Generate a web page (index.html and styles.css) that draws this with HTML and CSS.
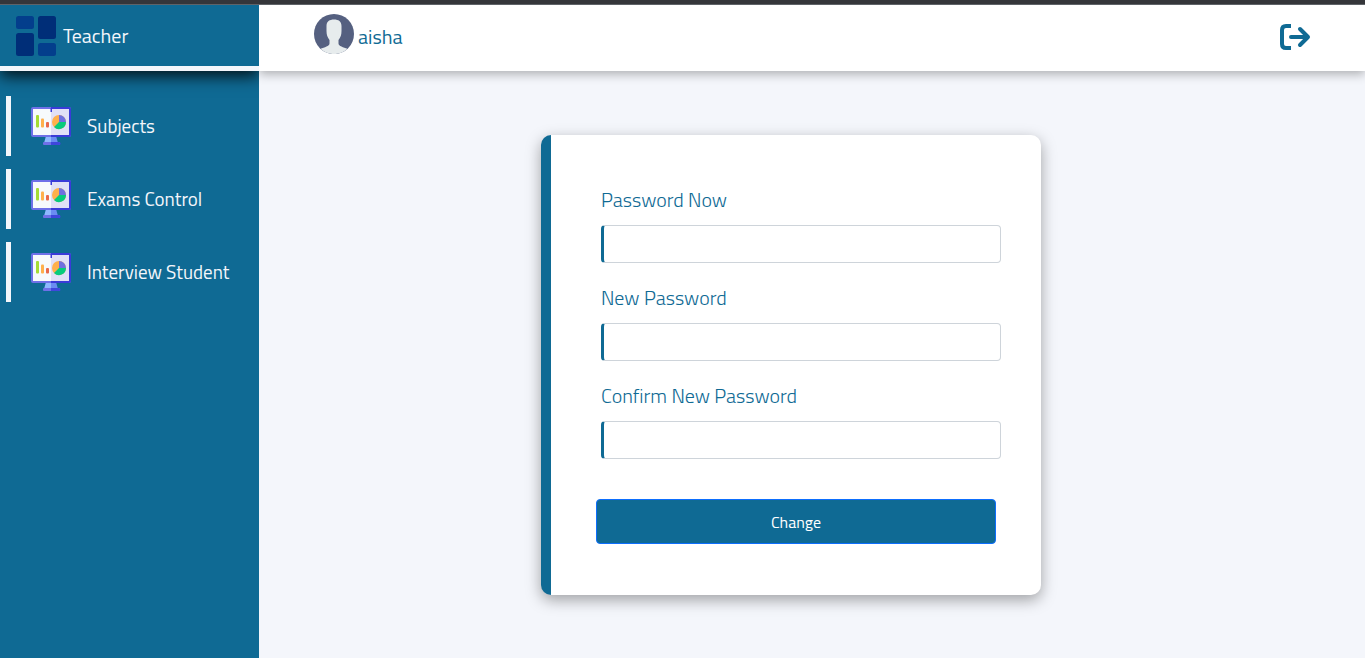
FILE: index.html
```html
<!DOCTYPE html>
<html lang="en">
<head>
<meta charset="utf-8">
<meta name="viewport" content="width=device-width, initial-scale=1">
<title>Change Password</title>
<link rel="stylesheet" href="styles.css">
</head>
<body>
<svg class="defs" aria-hidden="true">
  <symbol id="monitor" viewBox="0 0 40 40">
    <path fill="#8db8ff" d="M15 30h5v7h-7z"/>
    <path fill="#6a8cf2" d="M20 30h5l2 7h-7z"/>
    <rect x="0" y="1" width="40" height="30" rx="2" fill="#6f70e8"/>
    <path fill="#3a3bd8" d="M20 1h18a2 2 0 0 1 2 2v26a2 2 0 0 1-2 2H20z"/>
    <path fill="#f7fafc" d="M2 3h18v26H2z"/>
    <path fill="#e1e0f6" d="M20 3h18v26H20z"/>
    <path fill="#3a3bd8" d="M19.500 2h1.500v4h-1.500z"/>
    <rect x="5" y="9" width="3" height="12.500" rx="1" fill="#a6dc35"/>
    <rect x="10" y="12.500" width="3" height="9" rx="1" fill="#ffb04c"/>
    <rect x="15" y="16" width="3" height="5.500" rx="1" fill="#e8694a"/>
    <circle cx="28" cy="16" r="7" fill="#ffb04c"/>
    <path fill="#6f70e0" d="M28 16V9a7 7 0 0 1 7 7z"/>
    <path fill="#08cb7c" d="M28 16h7a7 7 0 0 1-12 5z"/>
    <rect x="12" y="36" width="17" height="3" rx="1" fill="#6f70e8"/>
    <path fill="#3f47dc" d="M20 36h8a1 1 0 0 1 0 3h-8z"/>
  </symbol>
</svg>
<div class="strip"></div>
<div class="app">
  <aside class="sidebar">
    <div class="brand">
      <svg class="brand-icon" viewBox="0 0 40 40" aria-hidden="true">
        <rect width="18" height="13" rx="2.500" fill="#033e8c"/>
        <rect y="17" width="18" height="23" rx="2.500" fill="#002e78"/>
        <rect x="22" width="18" height="23" rx="2.500" fill="#002e78"/>
        <rect x="22" y="27" width="18" height="13" rx="2.500" fill="#033e8c"/>
      </svg>
      <span>Teacher</span>
    </div>
    <nav class="menu">
      <a class="menu-item" href="#subjects"><svg class="menu-icon" aria-hidden="true"><use href="#monitor"/></svg>Subjects</a>
      <a class="menu-item" href="#exams"><svg class="menu-icon" aria-hidden="true"><use href="#monitor"/></svg>Exams Control</a>
      <a class="menu-item" href="#interview"><svg class="menu-icon" aria-hidden="true"><use href="#monitor"/></svg>Interview Student</a>
    </nav>
  </aside>
  <div class="page">
    <header class="topbar">
      <a class="user" href="#profile">
        <svg class="avatar" viewBox="0 0 40 40" aria-hidden="true">
          <circle cx="20" cy="20" r="20" fill="#556080"/>
          <path fill="#e7eced" d="M12.500 12c0-4.500 3-6.500 7.500-6.500s7.500 2 7.500 6.500v5c0 4-1 6.500-3 9v3.500c0 2.500 5 4 9 5.300a20 20 0 0 1-27 0c4-1.300 9-2.800 9-5.300V26c-2-2.500-3-5-3-9z"/>
        </svg>
        <span>aisha</span>
      </a>
      <button class="logout" type="button" aria-label="Log out">
        <svg viewBox="0 0 32 28" aria-hidden="true" fill="none" stroke="currentColor" stroke-width="4">
          <path d="M12 3H7Q3 3 3 7v14q0 4 4 4h5"/>
          <path d="M12 14h16M21 6l8 8-8 8" stroke-linecap="round" stroke-linejoin="round"/>
        </svg>
      </button>
    </header>
    <main class="content">
      <form class="card">
        <div class="field">
          <label for="current">Password Now</label>
          <input id="current" type="password">
        </div>
        <div class="field">
          <label for="new">New Password</label>
          <input id="new" type="password">
        </div>
        <div class="field">
          <label for="confirm">Confirm New Password</label>
          <input id="confirm" type="password">
        </div>
        <button class="submit" type="button">Change</button>
      </form>
    </main>
  </div>
</div>
</body>
</html>
```
FILE: styles.css
```css
* { box-sizing: border-box; }

body {
  margin: 0;
  min-height: 100vh;
  display: flex;
  flex-direction: column;
  background: #f4f6fb;
  color: #0f6a94;
  font: 20px/30px "Titillium Web", Roboto, sans-serif;
}

a { color: inherit; text-decoration: none; }
svg { display: block; flex: none; }
.defs { position: absolute; width: 0; height: 0; }

.strip {
  height: 5px;
  background: #35363a;
  border-bottom: 1px solid #5f6368;
}

.app { flex: 1; display: flex; }

.sidebar {
  width: 259px;
  flex: none;
  background: #0f6a94;
  color: #f4f6fb;
}

.brand {
  height: 66px;
  display: flex;
  align-items: center;
  gap: 7px;
  padding: 0 16px;
  border-bottom: 5px solid #f4f6fb;
  box-shadow: 0 5px 15px rgba(0, 0, 0, 0.85);
  clip-path: inset(0 0 -30px 0);
}

.brand-icon { width: 40px; height: 40px; }

.menu {
  display: flex;
  flex-direction: column;
  gap: 13px;
  padding: 25px 6px;
  font-size: 19px;
  line-height: 28px;
}

.menu-item {
  height: 60px;
  display: flex;
  align-items: center;
  gap: 16px;
  padding-left: 20px;
  border-left: 5px solid #f4f6fb;
}

.menu-icon { width: 40px; height: 40px; }

.page {
  flex: 1;
  display: flex;
  flex-direction: column;
}

.topbar {
  height: 66px;
  display: flex;
  align-items: center;
  justify-content: space-between;
  padding: 0 54px 0 55px;
  background: #fff;
  box-shadow: 0 3px 10px rgba(0, 0, 0, 0.3);
  clip-path: inset(0 0 -20px 0);
}

.user {
  display: flex;
  align-items: center;
  gap: 4px;
  padding-bottom: 8px;
}

.user span { padding-top: 6px; }
.avatar { width: 40px; height: 40px; }

.logout {
  padding: 0 0 2px;
  border: 0;
  background: none;
  color: #0f6a94;
}

.logout svg { width: 32px; height: 28px; }

.content {
  flex: 1;
  display: flex;
  justify-content: center;
  align-items: flex-start;
  padding: 64px 42px 63px 0;
}

.card {
  width: 500px;
  display: flex;
  flex-direction: column;
  gap: 20px;
  padding: 50px 40px 51px 50px;
  border-left: 10px solid #0f6a94;
  border-radius: 10px;
  background: #fff;
  box-shadow: 0 5px 15px rgba(0, 0, 0, 0.35);
}

.field {
  display: flex;
  flex-direction: column;
  gap: 10px;
}

.field label { font-weight: 300; }

.field input {
  height: 38px;
  padding: 6px 12px;
  border: 1px solid #ced4da;
  border-left: 3px solid #0f6a94;
  border-radius: 4px;
  background: #fff;
  font: inherit;
}

.submit {
  height: 45px;
  margin: 20px 5px 0 -5px;
  border: 1px solid #0d6efd;
  border-radius: 4px;
  background: #0f6a94;
  color: #fff;
  font: 16px/24px "Titillium Web", Roboto, sans-serif;
}
```
